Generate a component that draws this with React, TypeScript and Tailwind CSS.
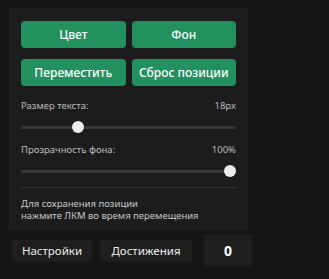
import React from "react";

const font = { fontFamily: '"Noto Sans", "Open Sans", sans-serif' };

function GreenButton({ label }: { label: string }) {
	return (
		<button className="h-[27px] rounded-[4px] bg-[#22915f] text-[12px] font-medium text-white">
			{label}
		</button>
	);
}

// thumb position along the 216px track
function Slider({ thumb }: { thumb: "left" | "right" }) {
	return (
		<div className="relative flex h-[14px] items-center">
			<div className="h-[3px] w-full rounded-full bg-[#383838]" />
			<div
				className={
					thumb === "left"
						? "absolute left-[51px] h-[12px] w-[12px] rounded-full bg-[#ececec]"
						: "absolute right-[0px] h-[12px] w-[12px] rounded-full bg-[#ececec]"
				}
			/>
		</div>
	);
}

export default function App() {
	return (
		<div
			className="h-[279px] w-[329px] overflow-hidden bg-[#151515] pt-[8px] pl-[9px]"
			style={font}
		>
			<div className="h-[222px] w-[239px] bg-[#1c1c1c] px-3 pt-[13px]">
				<div className="grid grid-cols-2 gap-x-[6px] gap-y-[11px]">
					<GreenButton label="Цвет" />
					<GreenButton label="Фон" />
					<GreenButton label="Переместить" />
					<GreenButton label="Сброс позиции" />
				</div>

				<div className="mt-[13px] flex justify-between text-[9.5px] leading-[14px] text-[#bdbdbd]">
					<span>Размер текста:</span>
					<span>18px</span>
				</div>
				<div className="mt-[7px]">
					<Slider thumb="left" />
				</div>

				<div className="mt-[9px] flex justify-between text-[9.5px] leading-[14px] text-[#bdbdbd]">
					<span>Прозрачность фона:</span>
					<span>100%</span>
				</div>
				<div className="mt-[7px]">
					<Slider thumb="right" />
				</div>

				<div className="mt-[9px] h-px bg-[#383838]" />

				<p className="mt-[10px] text-[9.5px] leading-[12px] text-[#c8c8c8]">
					Для сохранения позиции
					<br />
					нажмите ЛКМ во время перемещения
				</p>
			</div>

			<div className="mt-[5px] flex items-center">
				<button className="ml-[3px] h-[22px] w-[80px] bg-[#1e1e1e] text-[11.5px] text-[#ececec]">
					Настройки
				</button>
				<button className="ml-[8px] h-[22px] w-[92px] bg-[#1e1e1e] text-[11.5px] text-[#ececec]">
					Достижения
				</button>
				<div className="ml-[12px] flex h-[31px] w-[48px] items-center justify-center bg-[#1e1e1e] text-[14px] font-bold text-white">
					0
				</div>
			</div>
		</div>
	);
}
